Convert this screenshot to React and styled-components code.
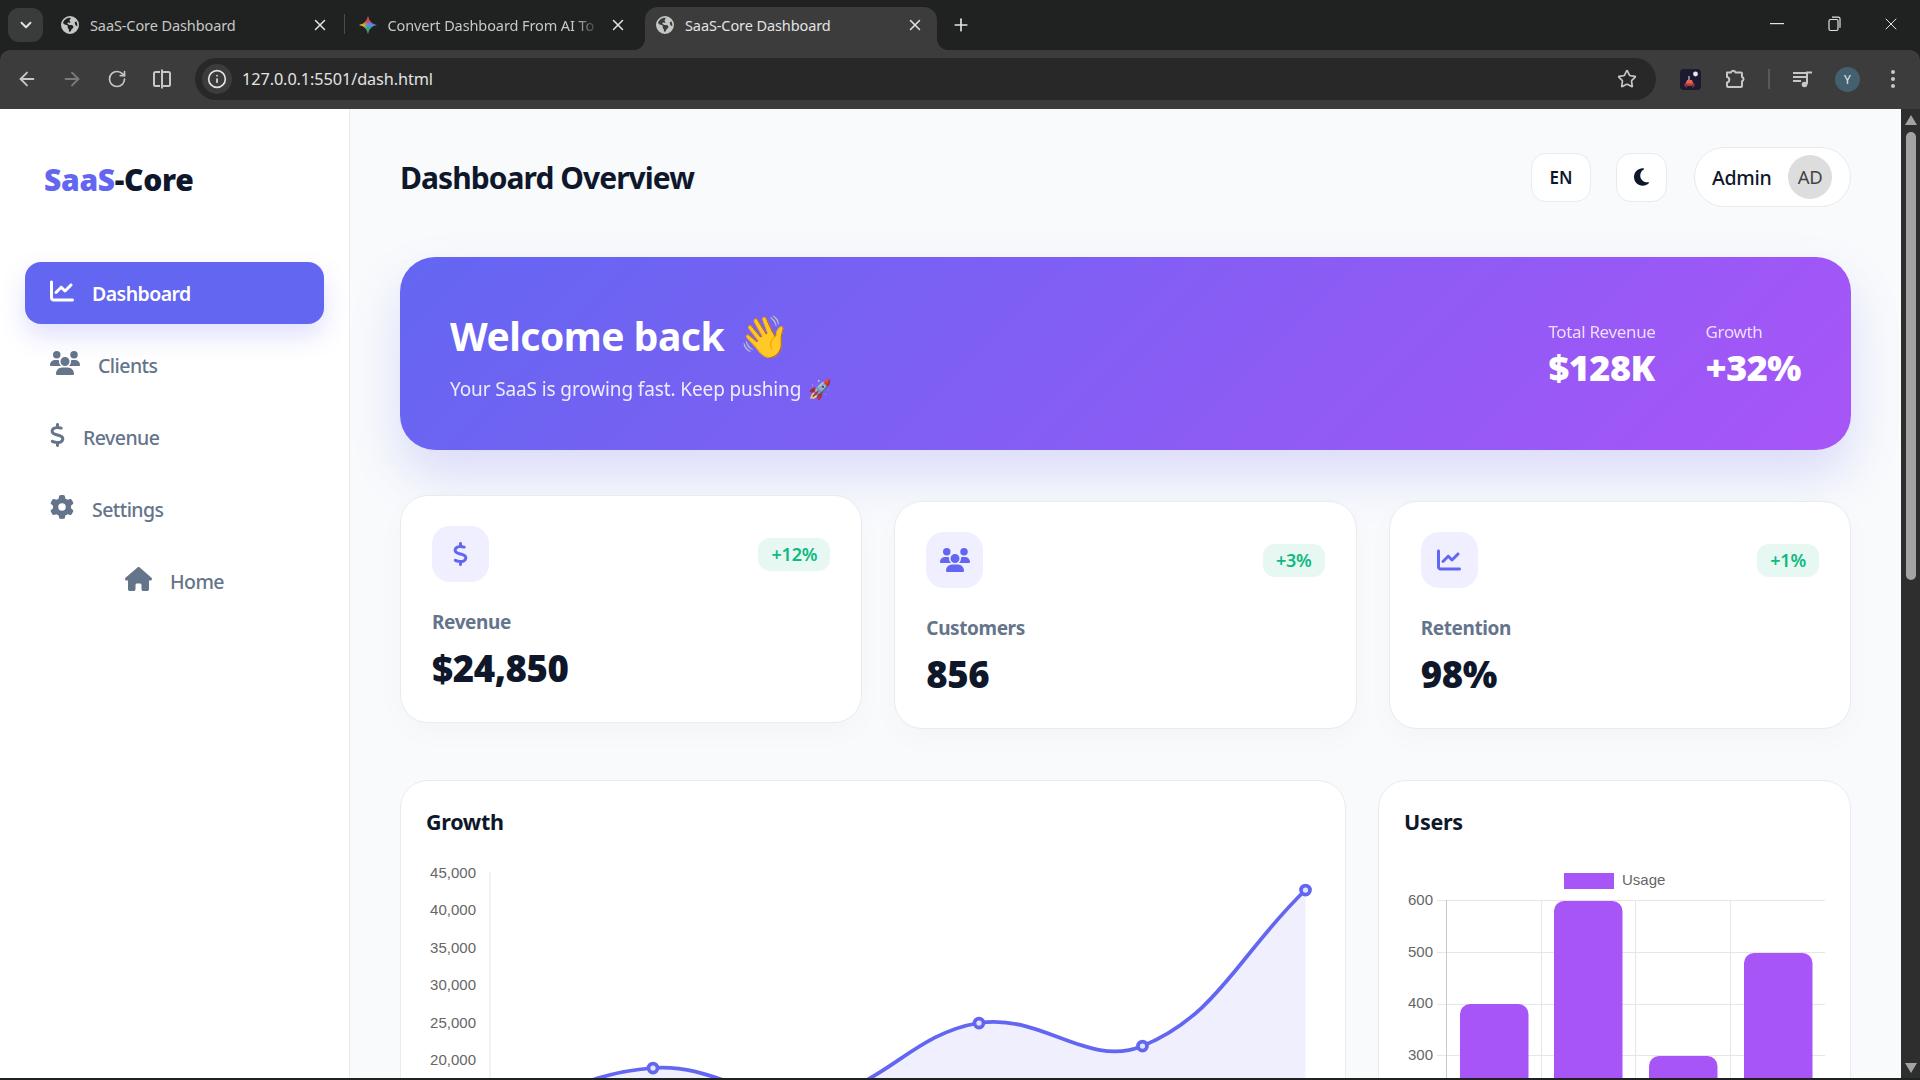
import React from 'react';
import styled, { createGlobalStyle } from 'styled-components';
import { ArrowLeft, ArrowRight, RotateCw, Info, Star, X, Plus, ChevronDown } from 'lucide-react';
import { FaChartLine, FaUsers, FaDollarSign, FaGear, FaHouse, FaMoon, FaEarthAmericas } from 'react-icons/fa6';

const UI = `"Noto Sans", "Open Sans", sans-serif`;

const Global = createGlobalStyle`
  html, body { margin: 0; padding: 0; width: 1920px; height: 1080px; overflow: hidden; background: #202221; }
  * { box-sizing: border-box; }
  #root { height: 1080px; }
`;

const Frame = styled.div`
  width: 1920px; height: 1080px; display: flex; flex-direction: column; background: #202221; font-family: ${UI};
`;

/* ---------- browser chrome ---------- */
const TabStrip = styled.div`
  height: 50px; flex: none; display: flex; align-items: flex-end; padding-left: 8px;
`;
const TabSwitcher = styled.div`
  width: 35px; height: 34px; margin-bottom: 8px; margin-right: 7px; border-radius: 11px; background: #3a3b3b;
  display: flex; align-items: center; justify-content: center; color: #e3e3e3;
`;
const Tab = styled.div`
  position: relative; width: 292px; height: 43px; margin-right: 5.5px; padding: 0 9px 8px 11px; display: flex; align-items: center;
  border-radius: 13px 13px 0 0; color: ${p => (p.$active ? '#e3e3e3' : '#c7c7c7')};
  background: ${p => (p.$active ? '#3c3c3c' : 'transparent')};
  ${p => p.$active && `
    &::before, &::after { content: ''; position: absolute; bottom: 0; width: 12px; height: 12px; }
    &::before { left: -12px; background: radial-gradient(circle at 0 0, transparent 12px, #3c3c3c 12.5px); }
    &::after { right: -12px; background: radial-gradient(circle at 100% 0, transparent 12px, #3c3c3c 12.5px); }
  `}
`;
const TabIcon = styled.span`
  width: 18px; height: 18px; flex: none; display: flex; align-items: center; justify-content: center; color: #c4c7c5;
`;
const TabTitle = styled.span`
  margin-left: 11px; flex: 1; min-width: 0; white-space: nowrap; font-size: 14.5px; letter-spacing: -0.1px;
  ${p => p.$fade && `-webkit-mask-image: linear-gradient(90deg, #000 88%, transparent 100%); mask-image: linear-gradient(90deg, #000 88%, transparent 100%);`}
`;
const TabClose = styled.span`
  width: 20px; height: 20px; flex: none; margin-left: 8px; margin-right: 3px; display: flex; align-items: center; justify-content: center; color: #e3e3e3;
`;
const TabDivider = styled.div`
  position: absolute; right: -3px; top: 7px; width: 1.5px; height: 20px; background: #4a4b4b;
`;
const NewTab = styled.div`
  width: 24px; height: 43px; margin-left: 6px; padding-bottom: 8px; display: flex; align-items: center; justify-content: center; color: #e3e3e3;
`;
const WindowControls = styled.div`
  margin-left: auto; align-self: flex-start; display: flex; height: 48px;
`;
const WindowButton = styled.div`
  width: 57.3px; display: flex; align-items: center; justify-content: center; color: #e3e3e3;
`;

const Toolbar = styled.div`
  height: 59px; flex: none; background: #3c3c3c; border-radius: 10px 10px 0 0; display: flex; align-items: center; padding: 0 0 1px 4.5px;
`;
const NavButton = styled.div`
  width: ${p => p.$w || 45}px; height: 40px; flex: none; display: flex; align-items: center; justify-content: center;
  color: ${p => (p.$dim ? '#7b7b7b' : '#c7c7c7')};
`;
const Omnibox = styled.div`
  width: 1461px; height: 42px; margin-left: 10.5px; margin-right: 11.5px; flex: none; border-radius: 21px; background: #282828;
  display: flex; align-items: center; padding-left: 7px; padding-right: 19px;
`;
const SiteInfo = styled.div`
  width: 30px; height: 30px; border-radius: 50%; background: #3c3c3c; display: flex; align-items: center; justify-content: center; color: #e3e3e3;
`;
const Url = styled.span`
  margin-left: 10px; font-size: 16.3px; color: #e3e3e3; flex: 1; letter-spacing: -0.1px;
`;
const ToolDivider = styled.div`
  width: 22px; display: flex; justify-content: center;
  &::after { content: ''; width: 2px; height: 20px; background: #5a5a5a; }
`;
const ProfileDot = styled.div`
  width: 25px; height: 25px; border-radius: 50%; background: #44606f; color: #e8eef2; font-size: 12px; display: flex; align-items: center; justify-content: center;
`;

/* ---------- page ---------- */
const Viewport = styled.div`
  height: 969px; flex: none; display: flex; overflow: hidden; background: #f8fafc;
`;
const Sidebar = styled.aside`
  width: 350px; flex: none; background: #fff; border-right: 1px solid #e7ebf1; padding: 51px 25px 0;
`;
const Logo = styled.div`
  padding-left: 19px; height: 40px; line-height: 40px; margin-bottom: 62px; font-size: 30px; font-weight: 900; color: #0f172a; letter-spacing: -0.3px;
  span { color: #6366f1; }
`;
const Nav = styled.nav`
  display: flex; flex-direction: column; gap: 10px;
`;
const NavItem = styled.a`
  height: 62px; padding: 0 25px; display: flex; align-items: center; justify-content: ${p => (p.$center ? 'center' : 'flex-start')}; gap: 18px;
  border-radius: 16px; font-size: 19.5px; font-weight: ${p => (p.$active ? 600 : 500)}; letter-spacing: -0.55px;
  color: ${p => (p.$active ? '#fff' : '#64748b')};
  background: ${p => (p.$active ? '#6366f1' : 'transparent')};
  box-shadow: ${p => (p.$active ? '0 12px 26px rgba(99,102,241,0.2)' : 'none')};
  svg { height: 24px; width: ${p => p.$iconW}px; flex: none; margin-top: -4px; }
`;
const Main = styled.main`
  flex: 1; min-width: 0; padding: 38px 50px 0; overflow: hidden;
`;
const Header = styled.header`
  height: 60px; display: flex; align-items: center; margin-bottom: 50px;
`;
const PageTitle = styled.h1`
  margin: 0 auto 0 0; font-size: 30px; font-weight: 700; color: #0f172a; letter-spacing: -0.95px;
`;
const HeaderButton = styled.button`
  height: 49px; width: ${p => p.$w}px; margin-right: ${p => p.$gap}px; padding: 0; border: 1px solid #e6ebf2; border-radius: 15px; background: #fff;
  display: flex; align-items: center; justify-content: center; font-family: ${UI}; font-size: 17px; font-weight: 600; color: #0f172a;
  svg { height: 20px; width: 15px; }
`;
const UserPill = styled.div`
  height: 60px; width: 157px; padding: 0 18px 0 17px; border: 1px solid #e6ebf2; border-radius: 30px; background: #fff;
  display: flex; align-items: center; justify-content: space-between; font-size: 19.5px; font-weight: 500; color: #0f172a; letter-spacing: -0.3px;
`;
const Avatar = styled.div`
  width: 44px; height: 44px; padding-bottom: 1px; border-radius: 50%; background: #dddddd; color: #444; font-size: 18.5px; font-weight: 400; display: flex; align-items: center; justify-content: center;
`;
const Hero = styled.section`
  height: 193px; padding: 0 50px; margin-bottom: 51px; border-radius: 35px; display: flex; align-items: center; justify-content: space-between;
  background: linear-gradient(135deg, #6366f1, #a855f7); color: #fff; box-shadow: 0 25px 50px rgba(99,102,241,0.2);
`;
const HeroCopy = styled.div`
  padding-top: 4px;
`;
const HeroTitle = styled.h2`
  margin: 0 0 13px; font-size: 39px; line-height: 54px; font-weight: 700; letter-spacing: -0.5px; white-space: pre;
`;
const HeroEmoji = styled.span`
  font-size: 41px; margin-left: -4px; letter-spacing: 0;
`;
const HeroSub = styled.p`
  margin: 0; font-size: 19px; line-height: 27px; opacity: 0.88; letter-spacing: -0.12px; white-space: pre;
`;
const Rocket = styled.span`
  margin-left: -3px;
`;
const HeroStats = styled.div`
  display: flex; gap: 50px; padding-top: 4px;
`;
const HeroStat = styled.div`
  display: flex; flex-direction: column;
`;
const HeroStatLabel = styled.span`
  font-size: 17px; line-height: 24px; opacity: 0.8; letter-spacing: -0.35px;
`;
const HeroStatValue = styled.strong`
  margin-top: 1px; font-size: 36px; line-height: 46px; font-weight: 900; letter-spacing: -0.5px;
`;
const Cards = styled.section`
  display: grid; grid-template-columns: repeat(3, minmax(0, 1fr)); gap: 32px; margin-bottom: 51px;
`;
const Card = styled.article`
  height: 228px; padding: 30px 31px; background: #fff; border: 1px solid #e7ebf2; border-radius: 28px;
  box-shadow: 0 10px 30px rgba(0,0,0,0.025);
  transform: ${p => (p.$raised ? 'translateY(-6px)' : 'none')};
`;
const CardTop = styled.div`
  display: flex; align-items: center; justify-content: space-between; margin-bottom: 26px;
`;
const CardIcon = styled.div`
  width: 57px; height: 56px; border-radius: 18px; background: #f0efff; color: #6366f1; display: flex; align-items: center; justify-content: center;
  svg { height: 24px; width: ${p => p.$iconW}px; }
`;
const Badge = styled.span`
  height: 33px; padding: 0 13px; border-radius: 12px; background: #e6f8f1; color: #10b981; font-size: 18px; font-weight: 600; display: flex; align-items: center; letter-spacing: -0.2px;
`;
const CardLabel = styled.div`
  font-size: 19px; line-height: 28px; font-weight: 700; color: #64748b; letter-spacing: -0.4px; margin-bottom: 7px;
`;
const CardValue = styled.div`
  font-size: 36.5px; line-height: 50px; font-weight: 900; color: #0f172a; letter-spacing: -0.4px;
`;
const Charts = styled.section`
  display: grid; grid-template-columns: minmax(0, 2fr) minmax(0, 1fr); gap: 32px;
`;
const ChartCard = styled.article`
  padding: 26px 25px; background: #fff; border: 1px solid #e7ebf2; border-radius: 28px;
`;
const ChartTitle = styled.h3`
  margin: 0 0 21px; font-size: 21.5px; line-height: 30px; font-weight: 700; color: #0f172a; letter-spacing: -0.3px;
`;
const ChartSvg = styled.svg`
  display: block;
  text { font-family: "Liberation Sans", Arial, sans-serif; font-size: 15px; fill: #666; }
`;
const Scrollbar = styled.div`
  width: 19px; flex: none; background: #2e2e2e; display: flex; flex-direction: column; align-items: center; padding: 6px 0 5px;
`;
const ScrollThumb = styled.div`
  width: 10px; height: 448px; margin-top: 7px; margin-bottom: auto; border-radius: 5px; background: #a3a3a3;
`;
const ScrollArrow = styled.div`
  width: 0; height: 0; border-left: 6px solid transparent; border-right: 6px solid transparent;
  ${p => (p.$down ? 'border-top: 10px solid #a3a3a3;' : 'border-bottom: 10px solid #a3a3a3;')}
`;
const BottomEdge = styled.div`
  flex: 1; background: #202221;
`;

/* ---------- drawings ---------- */
const STAR = 'M12 0c1 6.500 5 10.800 12 12-7 1.200-11 5.500-12 12-1-6.500-5-10.800-12-12 7-1.200 11-5.500 12-12z';
const GeminiIcon = () => (
  <svg width="20" height="20" viewBox="0 0 24 24">
    <defs>
      <linearGradient id="gemL" x1="0" y1="0" x2="1" y2="0">
        <stop offset="0.25" stopColor="#f4b400" />
        <stop offset="0.48" stopColor="#f4b400" stopOpacity="0" />
      </linearGradient>
      <linearGradient id="gemT" x1="0" y1="0" x2="0" y2="1">
        <stop offset="0.25" stopColor="#ea4335" />
        <stop offset="0.5" stopColor="#ea4335" stopOpacity="0" />
      </linearGradient>
      <linearGradient id="gemB" x1="0" y1="0" x2="0" y2="1">
        <stop offset="0.52" stopColor="#34a853" stopOpacity="0" />
        <stop offset="0.75" stopColor="#34a853" />
      </linearGradient>
    </defs>
    <path d={STAR} fill="#4b8df8" />
    <path d={STAR} fill="url(#gemL)" />
    <path d={STAR} fill="url(#gemT)" />
    <path d={STAR} fill="url(#gemB)" />
  </svg>
);
const SplitIcon = () => (
  <svg width="22" height="22" viewBox="0 0 22 22" fill="none" stroke="currentColor" strokeWidth="2">
    <path d="M9 4H4.500A1.500 1.500 0 0 0 3 5.500V16.500A1.500 1.500 0 0 0 4.500 18H9" />
    <rect x="11" y="4" width="8" height="14" rx="1.500" />
    <path d="M11 1.500V20.500" />
  </svg>
);
const RestoreIcon = () => (
  <svg width="16" height="18" viewBox="0 0 16 18" fill="none" stroke="currentColor" strokeWidth="1.200">
    <rect x="3" y="4.500" width="9" height="11" rx="1.500" />
    <path d="M6 2.200h6.500a1.500 1.500 0 0 1 1.500 1.500v9" />
  </svg>
);
const MinimizeIcon = () => (
  <svg width="14" height="2" viewBox="0 0 14 2"><rect width="14" height="1.200" fill="currentColor" /></svg>
);
const ExtensionIcon = () => (
  <svg width="21" height="21" viewBox="0 0 21 21">
    <rect width="21" height="21" rx="4" fill="#1b1a2e" />
    <circle cx="15.500" cy="5" r="2.400" fill="#e8e8ee" />
    <path d="M9 7v4" stroke="#e8e8ee" strokeWidth="1" />
    <path d="M7 11h5l1.500 4h-8z" fill="#e8625a" />
    <rect x="4.500" y="14.500" width="10" height="2.500" fill="#a8403c" />
    <circle cx="6" cy="17" r="1.500" fill="#7a2d30" />
    <circle cx="13" cy="17" r="1.500" fill="#7a2d30" />
  </svg>
);
const PuzzleIcon = () => (
  <svg width="22" height="22" viewBox="0 0 22 22" fill="none" stroke="currentColor" strokeWidth="2" strokeLinejoin="round">
    <path d="M3 4.500h4a2.300 2.300 0 0 1 4.500 0H17a1 1 0 0 1 1 1V9a2.200 2.200 0 0 1 0 4.200V18a1 1 0 0 1-1 1H4a1 1 0 0 1-1-1v-3.500a2.800 2.800 0 0 0 0-5.500z" />
  </svg>
);
const MediaIcon = () => (
  <svg width="22" height="22" viewBox="0 0 22 22" fill="none" stroke="currentColor" strokeWidth="2">
    <path d="M1 5h13M1 9h13M1 13h8" />
    <path d="M15 16V4.500h5" />
    <circle cx="12.500" cy="16.500" r="2.800" fill="currentColor" stroke="none" />
  </svg>
);
const KebabIcon = () => (
  <svg width="6" height="20" viewBox="0 0 6 20" fill="currentColor">
    <circle cx="3" cy="3" r="2" /><circle cx="3" cy="10" r="2" /><circle cx="3" cy="17" r="2" />
  </svg>
);

/* Chart.js style spline through the points, tension 0.4 */
const spline = (pts, t = 0.4) => {
  const cps = pts.map((p, i) => {
    const a = pts[i - 1] || p;
    const b = pts[i + 1] || p;
    const d1 = Math.hypot(p[0] - a[0], p[1] - a[1]);
    const d2 = Math.hypot(b[0] - p[0], b[1] - p[1]);
    const s = d1 + d2 || 1;
    const fa = (t * d1) / s;
    const fb = (t * d2) / s;
    return {
      prev: [p[0] - fa * (b[0] - a[0]), p[1] - fa * (b[1] - a[1])],
      next: [p[0] + fb * (b[0] - a[0]), p[1] + fb * (b[1] - a[1])],
    };
  });
  let d = `M${pts[0][0]} ${pts[0][1]}`;
  for (let i = 1; i < pts.length; i++) {
    d += ` C${cps[i - 1].next[0]} ${cps[i - 1].next[1]} ${cps[i].prev[0]} ${cps[i].prev[1]} ${pts[i][0]} ${pts[i][1]}`;
  }
  return d;
};

const linePts = [[490, 1120], [653, 1068], [816, 1097.5], [979, 1023], [1142.5, 1046], [1305.5, 890]];
const lineLabels = [['45,000', 878], ['40,000', 915], ['35,000', 953], ['30,000', 990], ['25,000', 1028], ['20,000', 1065]];
const lineD = spline(linePts);

const LineChart = () => (
  <ChartSvg width="894" height="400" viewBox="426 858 894 400">
    <line x1="490" x2="490" y1="872" y2="1258" stroke="#e6e6e6" />
    {lineLabels.map(([l, y]) => <text key={l} x="476" y={y} textAnchor="end">{l}</text>)}
    <path d={`${lineD} L1305.5 1200 L490 1200 Z`} fill="rgba(99,102,241,0.1)" />
    <path d={lineD} fill="none" stroke="#6366f1" strokeWidth="3.75" />
    {linePts.map(([x, y]) => <circle key={x} cx={x} cy={y} r="4.5" fill="#e4e4fb" stroke="#6366f1" strokeWidth="3.75" />)}
  </ChartSvg>
);

const gridY = [900.5, 952.5, 1004.5, 1055.5];
const gridX = [1541.5, 1635.5, 1730.5];
const bars = [[1460, 1004], [1554, 901], [1649, 1056], [1744, 953]];
const barLabels = [['600', 905], ['500', 957], ['400', 1008], ['300', 1060]];

const BarChart = () => (
  <ChartSvg width="421" height="400" viewBox="1404 858 421 400">
    <rect x="1564" y="873" width="50" height="16" fill="#a855f7" />
    <text x="1622" y="885">Usage</text>
    {barLabels.map(([l, y]) => <text key={l} x="1433" y={y} textAnchor="end">{l}</text>)}
    {gridY.map(y => <line key={y} x1="1437" x2="1825" y1={y} y2={y} stroke="#e6e6e6" />)}
    <line x1="1446.5" x2="1446.5" y1="900" y2="1258" stroke="#c9c9c9" />
    {gridX.map(x => <line key={x} x1={x} x2={x} y1="900" y2="1258" stroke="#e6e6e6" />)}
    {bars.map(([x, y]) => <rect key={x} x={x} y={y} width="68.5" height="400" rx="10" fill="#a855f7" />)}
  </ChartSvg>
);

const tabs = [
  { title: 'SaaS-Core Dashboard', icon: <FaEarthAmericas size={18} />, divider: true },
  { title: 'Convert Dashboard From AI To', icon: <GeminiIcon />, fade: true },
  { title: 'SaaS-Core Dashboard', icon: <FaEarthAmericas size={18} />, active: true },
];
const navItems = [
  { label: 'Dashboard', icon: <FaChartLine />, w: 24, active: true },
  { label: 'Clients', icon: <FaUsers />, w: 30 },
  { label: 'Revenue', icon: <FaDollarSign />, w: 15 },
  { label: 'Settings', icon: <FaGear />, w: 24 },
  { label: 'Home', icon: <FaHouse />, w: 27, center: true },
];
const stats = [
  { label: 'Revenue', value: '$24,850', change: '+12%', icon: <FaDollarSign />, w: 15, raised: true },
  { label: 'Customers', value: '856', change: '+3%', icon: <FaUsers />, w: 30 },
  { label: 'Retention', value: '98%', change: '+1%', icon: <FaChartLine />, w: 24 },
];

export default function App() {
  return (
    <Frame>
      <Global />
      <TabStrip>
        <TabSwitcher><ChevronDown size={18} strokeWidth={2.5} /></TabSwitcher>
        {tabs.map((t, i) => (
          <Tab key={i} $active={t.active}>
            <TabIcon>{t.icon}</TabIcon>
            <TabTitle $fade={t.fade}>{t.title}</TabTitle>
            <TabClose><X size={18} strokeWidth={2} /></TabClose>
            {t.divider && <TabDivider />}
          </Tab>
        ))}
        <NewTab><Plus size={20} strokeWidth={2} /></NewTab>
        <WindowControls>
          <WindowButton><MinimizeIcon /></WindowButton>
          <WindowButton><RestoreIcon /></WindowButton>
          <WindowButton><X size={20} strokeWidth={1.2} /></WindowButton>
        </WindowControls>
      </TabStrip>
      <Toolbar>
        <NavButton><ArrowLeft size={22} /></NavButton>
        <NavButton $dim><ArrowRight size={22} /></NavButton>
        <NavButton><RotateCw size={20} /></NavButton>
        <NavButton><SplitIcon /></NavButton>
        <Omnibox>
          <SiteInfo><Info size={20} /></SiteInfo>
          <Url>127.0.0.1:5501/dash.html</Url>
          <Star size={20} color="#c7c7c7" />
        </Omnibox>
        <NavButton><ExtensionIcon /></NavButton>
        <NavButton><PuzzleIcon /></NavButton>
        <ToolDivider />
        <NavButton $w={46}><MediaIcon /></NavButton>
        <NavButton $w={44}><ProfileDot>Y</ProfileDot></NavButton>
        <NavButton $w={46}><KebabIcon /></NavButton>
      </Toolbar>
      <Viewport>
        <Sidebar>
          <Logo><span>SaaS</span>-Core</Logo>
          <Nav>
            {navItems.map(n => (
              <NavItem key={n.label} $active={n.active} $center={n.center} $iconW={n.w}>{n.icon}{n.label}</NavItem>
            ))}
          </Nav>
        </Sidebar>
        <Main>
          <Header>
            <PageTitle>Dashboard Overview</PageTitle>
            <HeaderButton $w={60} $gap={25}>EN</HeaderButton>
            <HeaderButton $w={51} $gap={27}><FaMoon /></HeaderButton>
            <UserPill>Admin<Avatar>AD</Avatar></UserPill>
          </Header>
          <Hero>
            <HeroCopy>
              <HeroTitle>Welcome back  <HeroEmoji>👋</HeroEmoji></HeroTitle>
              <HeroSub>Your SaaS is growing fast. Keep pushing  <Rocket>🚀</Rocket></HeroSub>
            </HeroCopy>
            <HeroStats>
              <HeroStat><HeroStatLabel>Total Revenue</HeroStatLabel><HeroStatValue>$128K</HeroStatValue></HeroStat>
              <HeroStat><HeroStatLabel>Growth</HeroStatLabel><HeroStatValue>+32%</HeroStatValue></HeroStat>
            </HeroStats>
          </Hero>
          <Cards>
            {stats.map(s => (
              <Card key={s.label} $raised={s.raised}>
                <CardTop>
                  <CardIcon $iconW={s.w}>{s.icon}</CardIcon>
                  <Badge>{s.change}</Badge>
                </CardTop>
                <CardLabel>{s.label}</CardLabel>
                <CardValue>{s.value}</CardValue>
              </Card>
            ))}
          </Cards>
          <Charts>
            <ChartCard><ChartTitle>Growth</ChartTitle><LineChart /></ChartCard>
            <ChartCard><ChartTitle>Users</ChartTitle><BarChart /></ChartCard>
          </Charts>
        </Main>
        <Scrollbar>
          <ScrollArrow />
          <ScrollThumb />
          <ScrollArrow $down />
        </Scrollbar>
      </Viewport>
      <BottomEdge />
    </Frame>
  );
}
